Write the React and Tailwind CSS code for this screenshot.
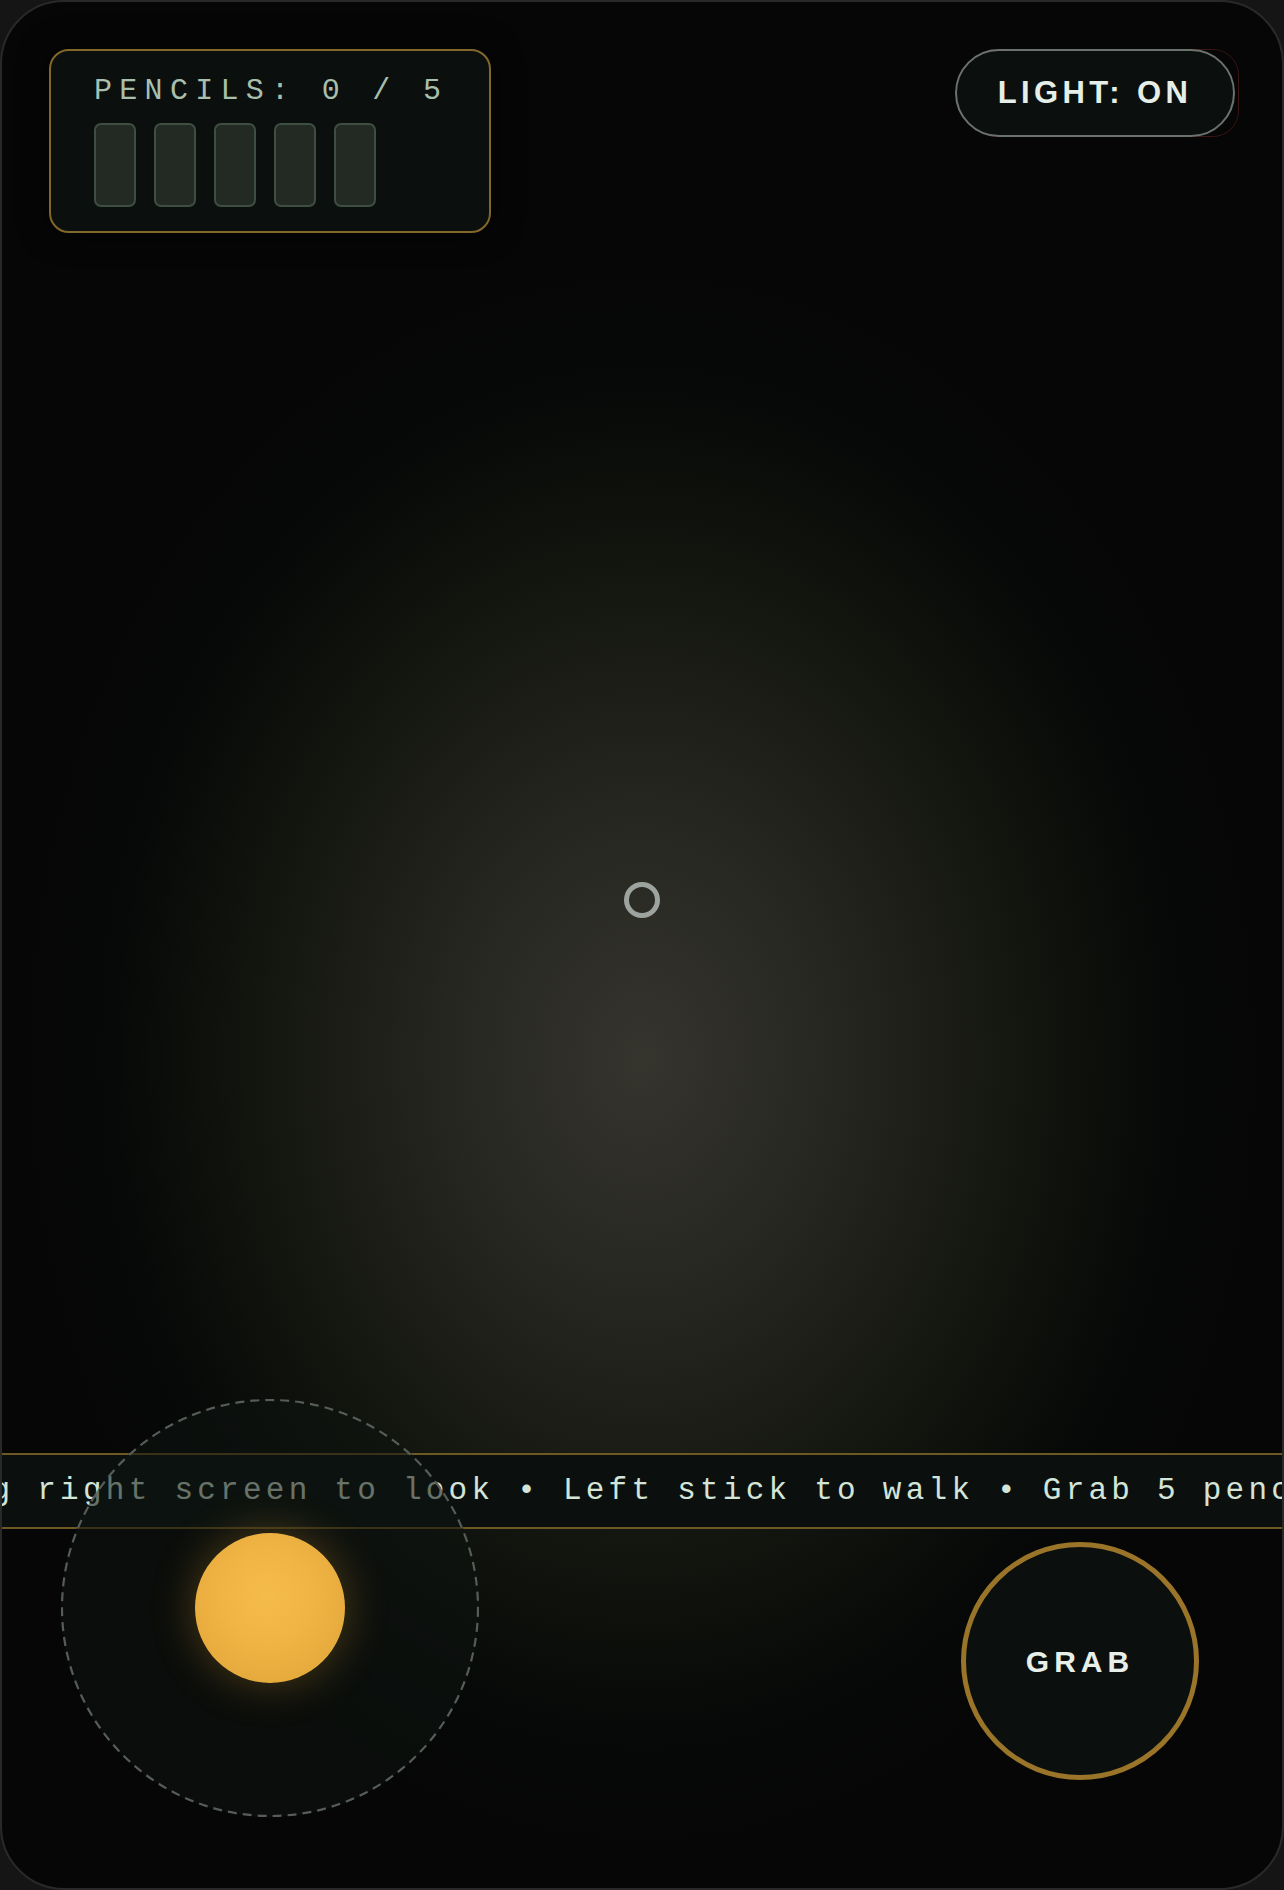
import React from 'react';

const PENCIL_SLOTS = [0, 1, 2, 3, 4];
const HINT = 'Drag right screen to look • Left stick to walk • Grab 5 pencils to escape • Drag right screen to look';

function PencilPanel() {
  return (
    <div className="w-[442px] h-[184px] rounded-[20px] border-2 border-[#82672a] bg-[#0b100e] pl-[43px] pt-[25px] shadow-[0_0_30px_rgba(0,0,0,0.6)]">
      <div className="font-['Liberation_Mono',monospace] text-[30px] leading-[30px] tracking-[7.3px] text-[#a9bfae]">
        PENCILS: 0 / 5
      </div>
      <div className="flex gap-[18px] mt-[17px]">
        {PENCIL_SLOTS.map(i => (
          <div key={i} className="w-[42px] h-[84px] rounded-[7px] border-2 border-[#3e4e42] bg-[#222a23]" />
        ))}
      </div>
    </div>
  );
}

function LightButton() {
  return (
    <div className="relative w-[280px] h-[88px]">
      {/* faint red outline peeking out behind the pill */}
      <div className="absolute left-[15px] -right-[4px] top-0 h-[88px] rounded-[26px] border border-[#3a1515]" />
      <button className="relative w-full h-full rounded-full border-2 border-[#6b716c] bg-[#0b100e] flex items-center justify-center font-['Liberation_Sans',Arial,sans-serif] font-bold text-[31px] tracking-[4.4px] text-[#e6eee8]">
        LIGHT: ON
      </button>
    </div>
  );
}

function Joystick() {
  return (
    <div className="relative z-20 -mt-[130px] w-[418px] h-[418px] shrink-0 rounded-full bg-[rgba(14,20,17,0.55)] flex items-center justify-center">
      <svg className="absolute inset-0" width="418" height="418" viewBox="0 0 418 418">
        <circle cx="209" cy="209" r="208" fill="none" stroke="#565c58" strokeWidth="2.2" strokeDasharray="9 6" />
      </svg>
      <div className="w-[150px] h-[150px] rounded-full bg-[radial-gradient(circle_at_48%_42%,#f4bb4a_0%,#f0b445_40%,#dea336_100%)] shadow-[0_0_45px_rgba(235,170,55,0.3)]" />
    </div>
  );
}

export default function App() {
  return (
    <div className="min-h-screen bg-[#151515]">
      <div className="w-[1284px] h-[1890px] overflow-hidden rounded-[64px] border-2 border-[#292929] flex flex-col bg-[radial-gradient(ellipse_620px_790px_at_50%_56%,#35352e_0%,#272721_30%,#13150f_62%,#070908_85%,#050605_100%)]">
        <header className="flex justify-between items-start px-[47px] pt-[47px]">
          <PencilPanel />
          <LightButton />
        </header>

        {/* view area with crosshair */}
        <main className="flex-1 flex items-center justify-center pt-[114px]">
          <div className="w-[36px] h-[36px] rounded-full border-[5px] border-[#9da39e]" />
        </main>

        {/* hint ticker */}
        <div className="relative z-10 h-[76px] shrink-0 border-y-2 border-[#6e5823] bg-[#0b100e] flex items-center overflow-hidden">
          <div className="ml-[-79px] whitespace-nowrap font-['Liberation_Mono',monospace] text-[31px] tracking-[4.25px] text-[#d3e4d8]">
            {HINT}
          </div>
        </div>

        {/* controls */}
        <div className="flex justify-between items-start pl-[59px] pr-[83px] pb-[71px]">
          <Joystick />
          <button className="mt-[13px] w-[238px] h-[238px] shrink-0 rounded-full border-[5px] border-[#9a7429] bg-[#0b100e] flex items-center justify-center font-['Liberation_Sans',Arial,sans-serif] font-bold text-[30px] tracking-[5px] text-[#e8efe9]">
            GRAB
          </button>
        </div>
      </div>
    </div>
  );
}
